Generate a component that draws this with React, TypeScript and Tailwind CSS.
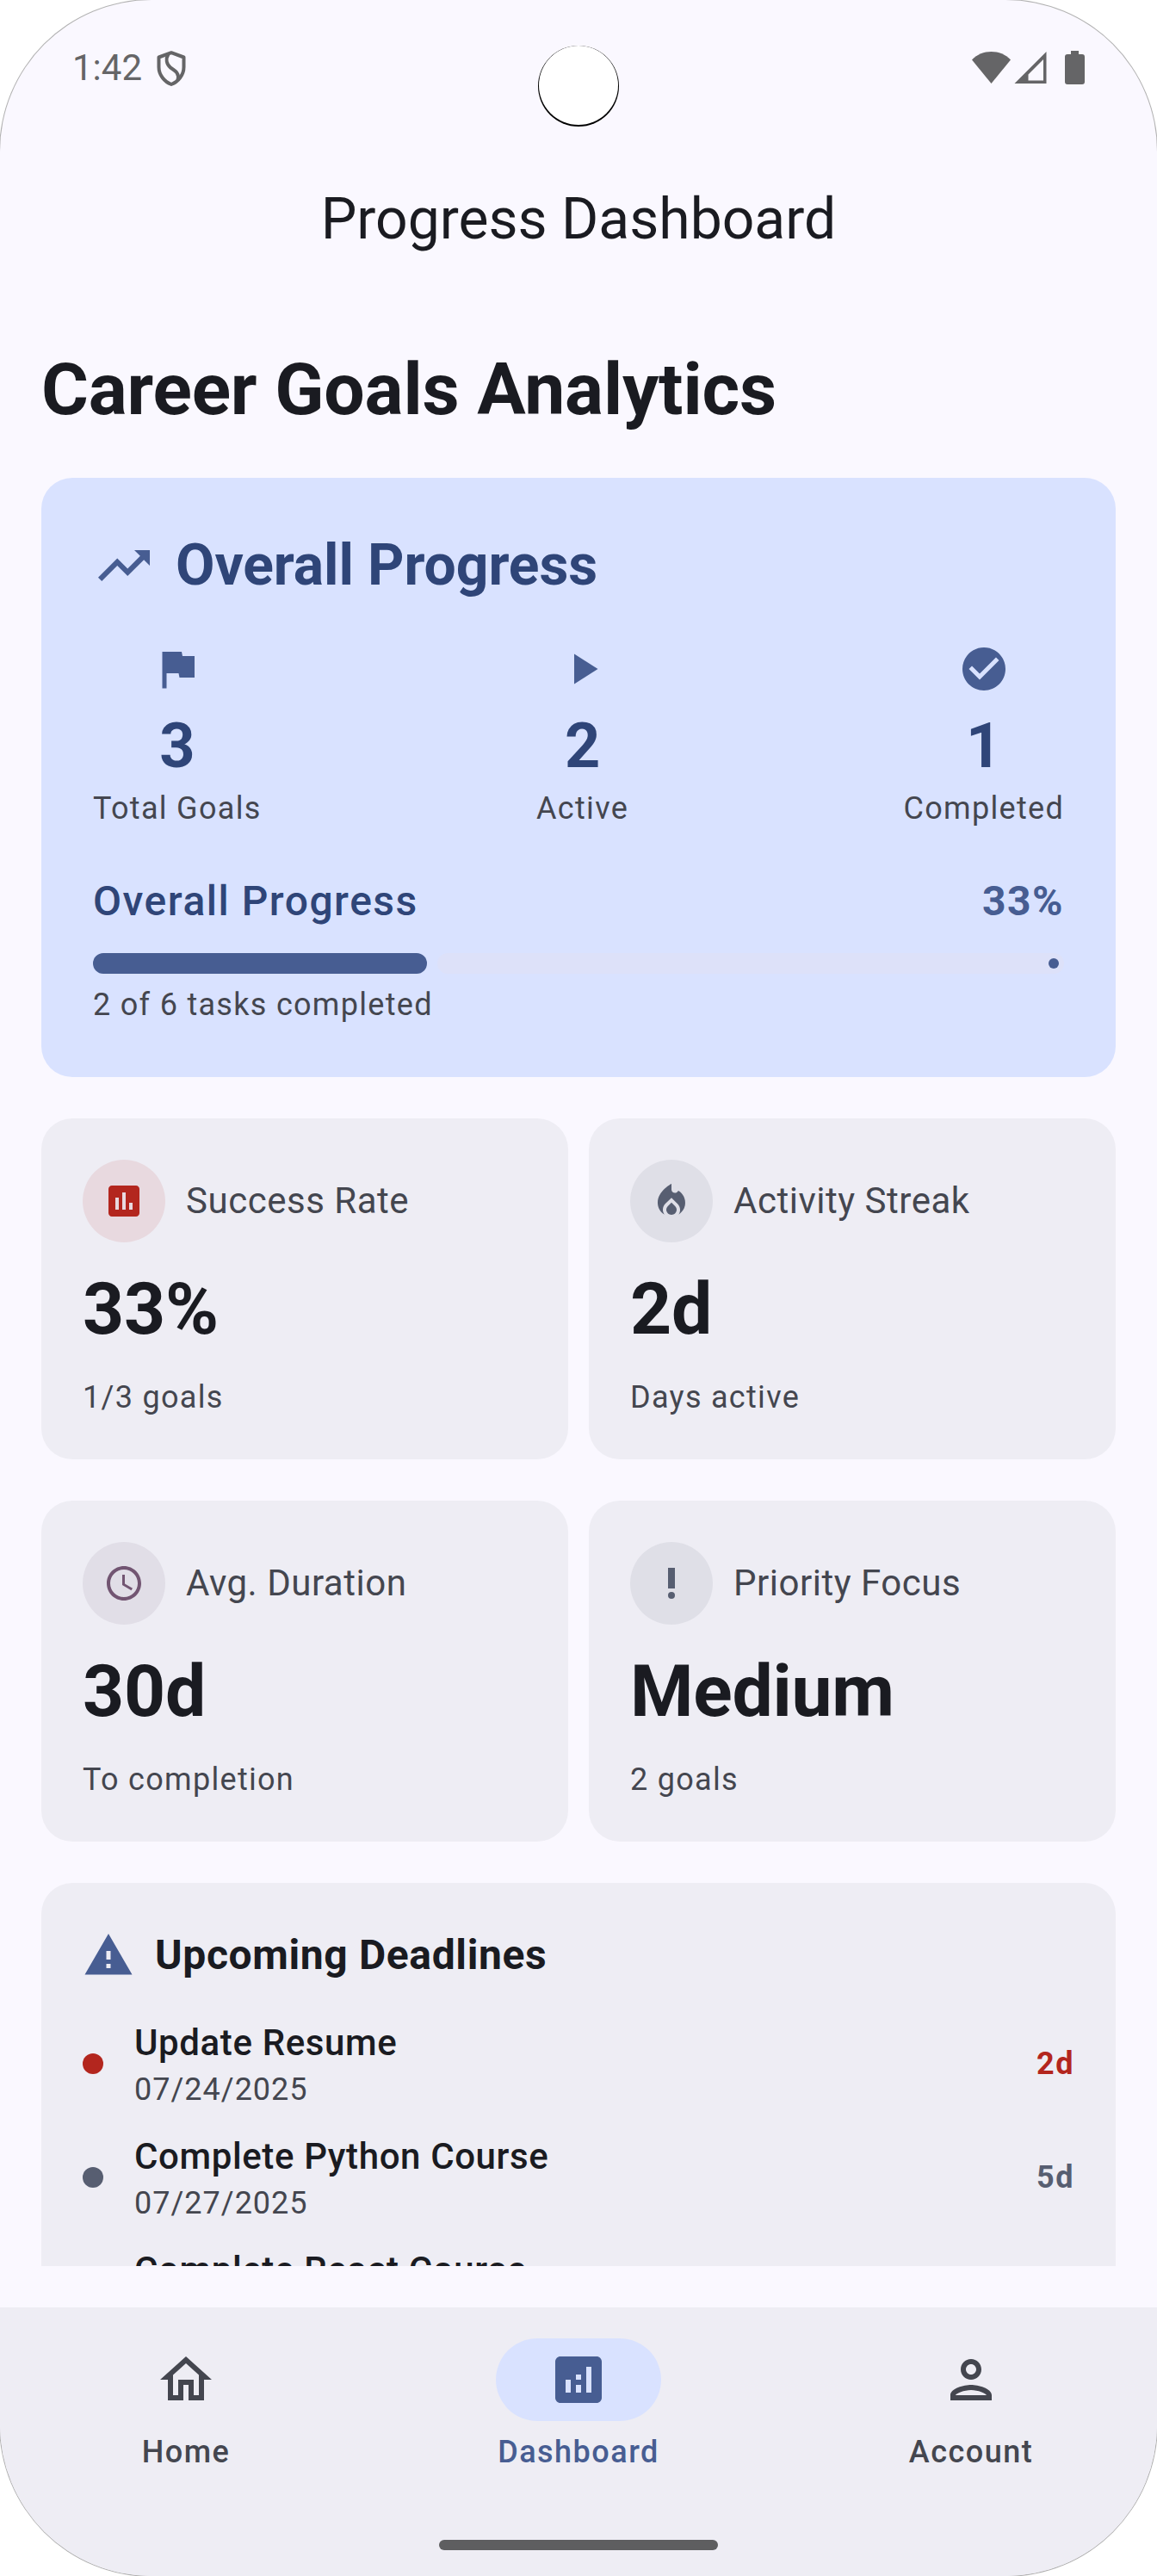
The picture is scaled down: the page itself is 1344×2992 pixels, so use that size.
import type { ReactNode } from 'react';
import type { IconType } from 'react-icons';
import {
  MdAnalytics,
  MdAssessment,
  MdCheckCircle,
  MdFlag,
  MdLocalFireDepartment,
  MdOutlineHome,
  MdPlayArrow,
  MdPriorityHigh,
  MdSchedule,
  MdTrendingUp,
  MdWarning,
} from 'react-icons/md';

function StatusBar() {
  return (
    <div className="relative flex h-[158px] items-start justify-between pt-[54px] pr-[84px] pl-[84px] text-[#656567]">
      <div className="flex items-start">
        <span className="w-[98px] text-[42px] leading-[50px]">1:42</span>
        <svg className="mt-[5px] h-[41px] w-[34px]" viewBox="0 0 34 41" fill="none" stroke="currentColor" strokeWidth="4" strokeLinejoin="round">
          <path d="M17 2.2 31.5 7.5V19C31.5 28 25 36 17 39 9 36 2.500 28 2.500 19V7.500Z" />
          <path d="M13.500 4C10.500 9 11 15 16 19.500 23 24 26.500 27 24.500 34" />
        </svg>
      </div>
      <div className="flex pt-[5px]">
        <svg className="h-[39px] w-[131px]" viewBox="0 0 131 39" fill="currentColor">
          <path d="M0 10.500C6 4 14 1 22.500 1S39 4 45 10.500L22.500 38Z" />
          <path fillRule="evenodd" d="M86.500 1V38H49.500ZM83 10 65.500 27.500V34.500H83Z" />
          <path d="M115 0h9v4h4a3 3 0 0 1 3 3v29a3 3 0 0 1-3 3h-17a3 3 0 0 1-3-3V7a3 3 0 0 1 3-3h4z" />
        </svg>
      </div>
      <div className="absolute top-[53px] left-[626px] size-[92px] rounded-full bg-white shadow-[0_1px_0_1px_#000]" />
    </div>
  );
}

function Stat({ icon: Icon, value, label }: { icon: IconType; value: string; label: string }) {
  return (
    <div className="flex flex-col items-center">
      <Icon className="size-[60px] text-[#475d92]" />
      <span className="mt-3 text-[72px] leading-[96px] font-bold text-[#2f4578]">{value}</span>
      <span className="text-[36px] leading-[48px] tracking-[1.3px] text-[#44464f]">{label}</span>
    </div>
  );
}

function OverallProgress() {
  return (
    <section className="rounded-[36px] bg-[#d9e2ff] p-[60px]">
      <div className="flex items-center gap-6">
        <MdTrendingUp className="size-[72px] text-[#475d92]" />
        <h2 className="text-[66px] leading-[84px] font-bold tracking-[-0.1px] text-[#2f4578]">Overall Progress</h2>
      </div>
      <div className="mt-12 flex justify-between">
        <Stat icon={MdFlag} value="3" label="Total Goals" />
        <Stat icon={MdPlayArrow} value="2" label="Active" />
        <Stat icon={MdCheckCircle} value="1" label="Completed" />
      </div>
      <div className="mt-12 flex justify-between text-[48px] leading-[72px] tracking-[1.5px]">
        <span className="font-medium text-[#2f4578]">Overall Progress</span>
        <span className="font-bold text-[#475d92]">33%</span>
      </div>
      <div className="mt-6 flex h-6 gap-3">
        <div className="w-[388px] rounded-full bg-[#475d92]" />
        <div className="flex flex-1 items-center justify-end rounded-full bg-[#dde1f9] pr-1.5">
          <div className="size-3 rounded-full bg-[#475d92]" />
        </div>
      </div>
      <p className="mt-3 text-[36px] leading-[48px] tracking-[1.3px] text-[#44464f]">2 of 6 tasks completed</p>
    </section>
  );
}

function MetricCard({ icon, tint, label, value, note }: { icon: ReactNode; tint: string; label: string; value: string; note: string }) {
  return (
    <section className="rounded-[36px] bg-[#eeedf4] p-12">
      <div className="flex items-center gap-6">
        <div className={`flex size-24 items-center justify-center rounded-full ${tint}`}>{icon}</div>
        <h3 className="text-[42px] leading-[60px] tracking-[0.52px] text-[#44464f]">{label}</h3>
      </div>
      <p className="mt-6 text-[84px] leading-[108px] font-bold tracking-[-0.25px] text-[#1a1b21]">{value}</p>
      <p className="mt-6 text-[36px] leading-[48px] tracking-[1.3px] text-[#44464f]">{note}</p>
    </section>
  );
}

function Deadline({ title, date, left, dot, tone }: { title: string; date: string; left: string; dot: string; tone: string }) {
  return (
    <li className="flex items-center">
      <span className={`size-6 rounded-full ${dot}`} />
      <div className="ml-9 flex-1">
        <p className="text-[42px] leading-[60px] font-medium tracking-[0.62px] text-[#1a1b21]">{title}</p>
        <p className="text-[36px] leading-[48px] tracking-[1px] text-[#44464f]">{date}</p>
      </div>
      <span className={`text-[36px] leading-[48px] font-bold tracking-[1.5px] ${tone}`}>{left}</span>
    </li>
  );
}

function NavItem({ icon, label, active = false }: { icon: ReactNode; label: string; active?: boolean }) {
  return (
    <div className={`flex flex-1 flex-col items-center gap-3 ${active ? 'text-[#475d92]' : 'text-[#44464f]'}`}>
      <div className={`flex h-24 w-48 items-center justify-center rounded-full ${active ? 'bg-[#d9e2ff]' : ''}`}>{icon}</div>
      <span className="text-[36px] leading-[48px] font-medium tracking-[1.5px]">{label}</span>
    </div>
  );
}

function PersonIcon() {
  return (
    <svg className="size-[72px]" viewBox="0 0 24 24" fill="currentColor">
      <path d="M12 6c1.100 0 2 .9 2 2s-.9 2-2 2-2-.9-2-2 .9-2 2-2m0 10c2.700 0 5.800 1.290 6 2H6c.23-.72 3.310-2 6-2m0-12C9.790 4 8 5.790 8 8s1.790 4 4 4 4-1.790 4-4-1.790-4-4-4zm0 10c-2.670 0-8 1.340-8 4v2h16v-2c0-2.660-5.330-4-8-4z" />
    </svg>
  );
}

export default function App() {
  return (
    <div className="h-[2992px] w-[1344px] overflow-hidden bg-white font-['Roboto',sans-serif]">
      <div className="flex h-full flex-col overflow-hidden rounded-[176px] bg-[#faf8ff] shadow-[0_0_0_1px_rgba(0,0,0,0.3)]">
        <StatusBar />
        <header className="flex h-[193px] items-center justify-center">
          <h1 className="text-[66px] leading-[84px] text-[#1a1b21]">Progress Dashboard</h1>
        </header>
        <main className="mx-12 flex h-[2281px] flex-col gap-12 overflow-hidden pt-12">
          <h2 className="text-[84px] leading-[108px] font-bold tracking-[-0.15px] text-[#1a1b21]">Career Goals Analytics</h2>
          <OverallProgress />
          <div className="grid grid-cols-2 gap-x-6 gap-y-12">
            <MetricCard icon={<MdAssessment className="size-12 text-[#b3261e]" />} tint="bg-[#e8d9df]" label="Success Rate" value="33%" note="1/3 goals" />
            <MetricCard icon={<MdLocalFireDepartment className="size-12 text-[#575e71]" />} tint="bg-[#dfdfe7]" label="Activity Streak" value="2d" note="Days active" />
            <MetricCard icon={<MdSchedule className="size-12 text-[#725572]" />} tint="bg-[#e1dee7]" label="Avg. Duration" value="30d" note="To completion" />
            <MetricCard icon={<MdPriorityHigh className="size-12 text-[#575e71]" />} tint="bg-[#dfdfe7]" label="Priority Focus" value="Medium" note="2 goals" />
          </div>
          <section className="shrink-0 rounded-[36px] bg-[#eeedf4] p-12">
            <div className="flex items-center gap-6">
              <MdWarning className="size-[60px] text-[#475d92]" />
              <h3 className="text-[48px] leading-[72px] font-bold tracking-[0.63px] text-[#1a1b21]">Upcoming Deadlines</h3>
            </div>
            <ul className="mt-9 flex flex-col gap-6">
              <Deadline title="Update Resume" date="07/24/2025" left="2d" dot="bg-[#b3261e]" tone="text-[#b3261e]" />
              <Deadline title="Complete Python Course" date="07/27/2025" left="5d" dot="bg-[#575e71]" tone="text-[#575e71]" />
              <Deadline title="Complete React Course" date="08/01/2025" left="10d" dot="bg-[#575e71]" tone="text-[#575e71]" />
            </ul>
          </section>
        </main>
        <nav className="mt-12 flex flex-1 flex-col items-center bg-[#eeedf4] pt-9">
          <div className="flex w-full gap-6">
            <NavItem icon={<MdOutlineHome className="size-[72px]" />} label="Home" />
            <NavItem icon={<MdAnalytics className="size-[72px]" />} label="Dashboard" active />
            <NavItem icon={<PersonIcon />} label="Account" />
          </div>
          <div className="mt-[78px] h-3 w-[324px] rounded-full bg-[#5e5e60]" />
        </nav>
      </div>
    </div>
  );
}
